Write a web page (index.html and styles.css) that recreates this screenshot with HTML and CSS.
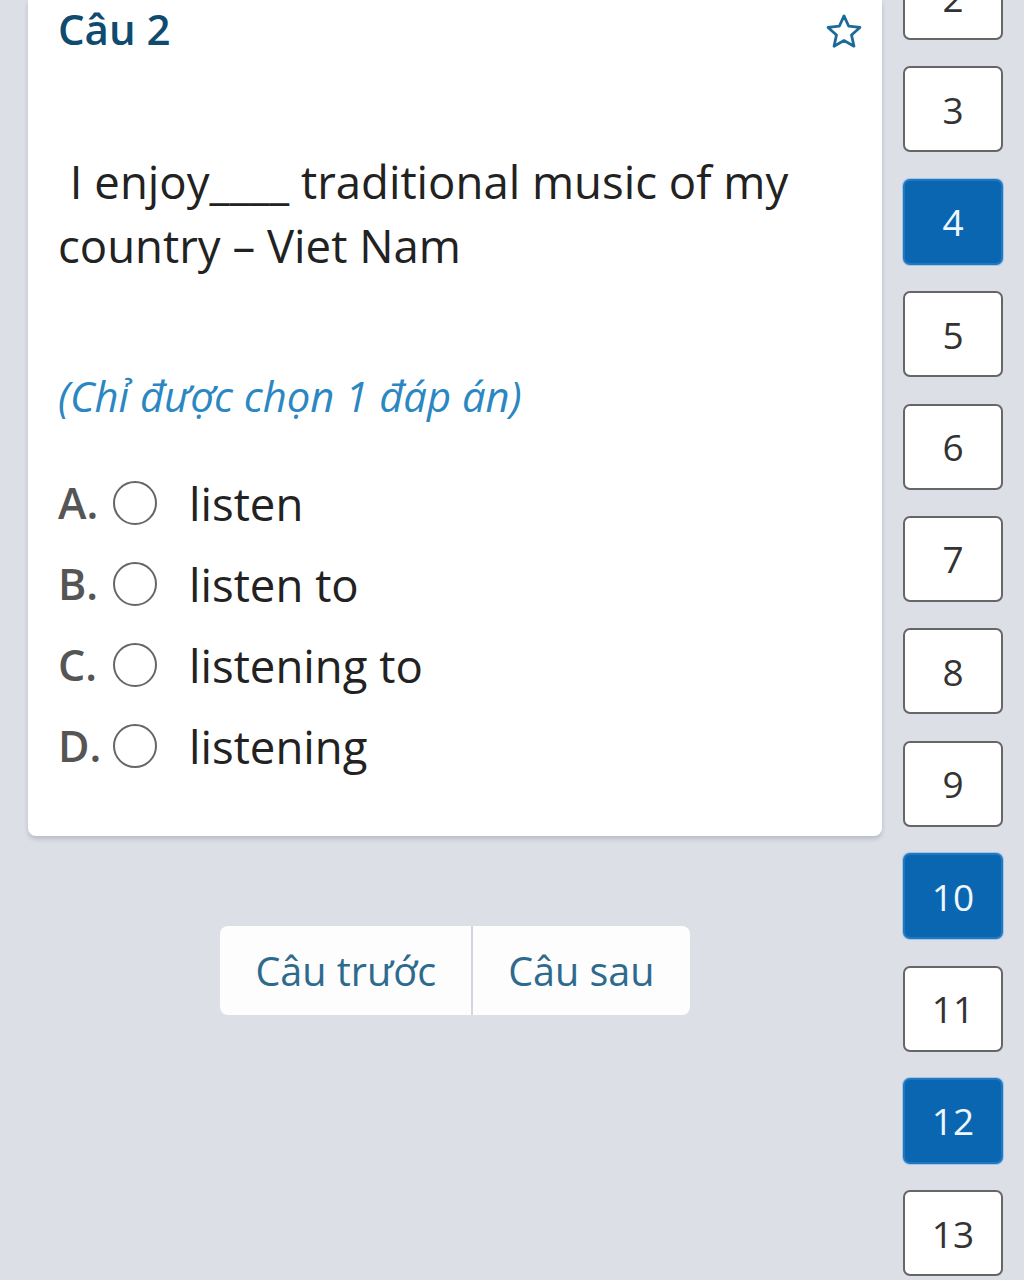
FILE: index.html
```html
<!DOCTYPE html>
<html lang="vi">
<head>
  <meta charset="UTF-8">
  <meta name="viewport" content="width=device-width, initial-scale=1.0">
  <title>Câu 2</title>
  <link rel="stylesheet" href="styles.css">
</head>
<body>
  <div class="page">
    <main class="main">
      <section class="card">
        <div class="card-head">
          <h2 class="q-title">Câu 2</h2>
          <button class="star" aria-label="Đánh dấu">
            <svg width="42" height="42" viewBox="0 0 24 24" fill="none" stroke="#1b6a98" stroke-width="1.6" stroke-linejoin="round">
              <path d="M12 2.8l2.7 5.9 6.4.7-4.8 4.3 1.4 6.4L12 16.9l-5.7 3.2 1.4-6.4-4.8-4.3 6.4-.7z"/>
            </svg>
          </button>
        </div>

        <p class="q-text">&nbsp;I enjoy____ traditional music of my country – Viet Nam</p>

        <p class="hint">(Chỉ được chọn 1 đáp án)</p>

        <ul class="answers">
          <li class="answer"><span class="letter">A.</span><span class="radio"></span><span class="answer-text">listen</span></li>
          <li class="answer"><span class="letter">B.</span><span class="radio"></span><span class="answer-text">listen to</span></li>
          <li class="answer"><span class="letter">C.</span><span class="radio"></span><span class="answer-text">listening to</span></li>
          <li class="answer"><span class="letter">D.</span><span class="radio"></span><span class="answer-text">listening</span></li>
        </ul>
      </section>

      <div class="pager">
        <button class="pager-btn">Câu trước</button>
        <button class="pager-btn">Câu sau</button>
      </div>
    </main>

    <aside class="q-list">
      <a class="q-num">2</a>
      <a class="q-num">3</a>
      <a class="q-num done">4</a>
      <a class="q-num">5</a>
      <a class="q-num">6</a>
      <a class="q-num">7</a>
      <a class="q-num">8</a>
      <a class="q-num">9</a>
      <a class="q-num done">10</a>
      <a class="q-num">11</a>
      <a class="q-num done">12</a>
      <a class="q-num">13</a>
    </aside>
  </div>
</body>
</html>
```

FILE: styles.css
```css
body {
  margin: 0;
  padding: 0;
  background-color: #dcdfe6;
  font-family: "Open Sans", "Noto Sans", sans-serif;
  overflow: hidden;
}

.page {
  display: flex;
  height: 1280px;
}

.main {
  width: 854px;
  padding-left: 28px;
}

/* question card */
.card {
  background-color: #fff;
  border-radius: 0 0 8px 8px;
  box-shadow: 0 3px 4px rgba(60, 70, 90, 0.22);
  padding: 0 17px 50px 30px;
}

.card-head {
  display: flex;
  justify-content: space-between;
  align-items: flex-start;
  padding-top: 4px;
}

.q-title {
  margin: 0;
  font-size: 42px;
  line-height: 50px;
  font-weight: 600;
  color: #0e4b6f;
}

.star {
  background: none;
  border: none;
  padding: 0;
  margin-top: 7px;
  cursor: pointer;
}

.q-text {
  margin: 93px 0 0;
  font-size: 45.5px;
  line-height: 64px;
  color: #222;
}

.hint {
  margin: 94px 0 0;
  font-size: 41.8px;
  line-height: 50px;
  font-style: italic;
  color: #2b87c1;
}

.answers {
  list-style: none;
  margin: 41px 0 0;
  padding: 0;
}

.answer {
  display: flex;
  align-items: center;
  height: 81px;
}

.letter {
  width: 55px;
  font-size: 43px;
  font-weight: 600;
  color: #555;
}

.radio {
  width: 40px;
  height: 40px;
  border: 2px solid #666;
  border-radius: 50%;
  margin-right: 32px;
}

.answer-text {
  font-size: 45.5px;
  color: #222;
}

/* prev / next */
.pager {
  display: flex;
  justify-content: center;
  margin-top: 90px;
}

.pager-btn {
  height: 89px;
  padding: 0 35px;
  background-color: #fdfdfd;
  border: none;
  font-family: inherit;
  font-size: 39.5px;
  color: #2e6a8e;
  cursor: pointer;
}

.pager-btn:first-child {
  border-radius: 8px 0 0 8px;
  border-right: 2px solid #d3d6dc;
}

.pager-btn:last-child {
  border-radius: 0 8px 8px 0;
}

/* question list */
.q-list {
  display: flex;
  flex-direction: column;
  gap: 26.4px;
  margin-top: -46px;
  padding-left: 21px;
}

.q-num {
  box-sizing: border-box;
  width: 100px;
  height: 86px;
  display: flex;
  align-items: center;
  justify-content: center;
  background-color: #fff;
  border: 2px solid #666;
  border-radius: 7px;
  font-size: 37px;
  color: #333;
}

.q-num.done {
  background-color: #0b66b1;
  border-color: #1f78c2;
  box-shadow: 0 0 0 1px rgba(120, 180, 235, 0.6);
  color: #eef7ff;
}
```
